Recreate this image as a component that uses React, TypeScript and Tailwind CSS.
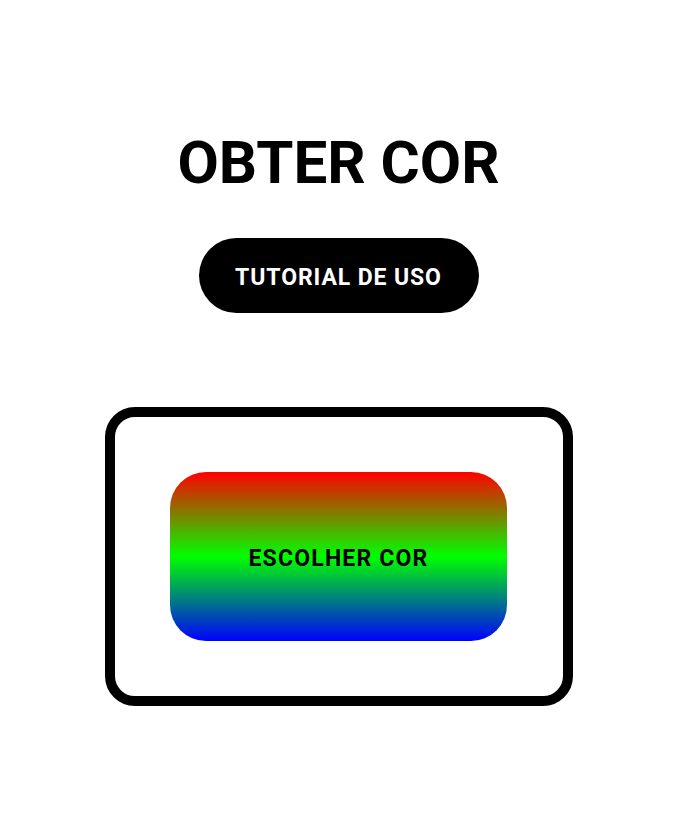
export default function App() {
  return (
    <div className="min-h-screen bg-white flex flex-col items-center font-['Roboto',sans-serif] text-black">
      <h1 className="mt-[133px] text-[60px] leading-none font-bold">OBTER COR</h1>

      <button className="mt-[45px] w-[280px] h-[75px] pt-[6px] rounded-full bg-black text-white text-[23px] font-bold tracking-[0.9px]">
        TUTORIAL DE USO
      </button>

      <div className="mt-[94px] w-[468px] h-[299px] border-[10px] border-black rounded-[30px] flex items-center justify-center">
        <button className="w-[337px] h-[169px] pt-[5px] rounded-[36px] bg-[linear-gradient(to_bottom,#ff0000,#00ff00,#0000ff)] text-[23px] font-bold tracking-[1.2px] text-black">
          ESCOLHER COR
        </button>
      </div>
    </div>
  );
}
